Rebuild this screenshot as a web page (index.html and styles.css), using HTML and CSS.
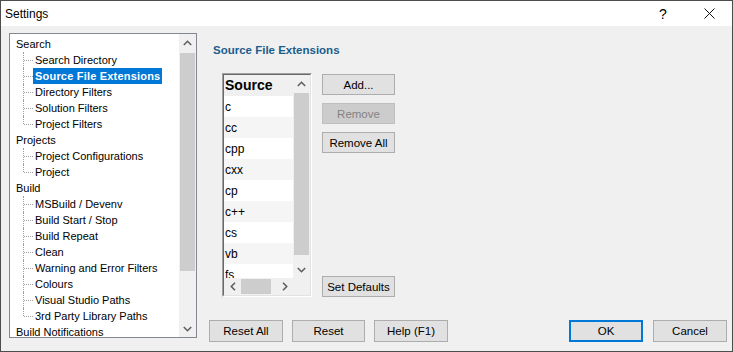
FILE: index.html
```html
<!DOCTYPE html>
<html>
<head>
<meta charset="utf-8">
<title>Settings</title>
<link rel="stylesheet" href="styles.css">
</head>
<body>
<div class="window">
  <div class="titlebar">
    <span class="title">Settings</span>
    <span class="tb-btn tb-help">?</span>
    <span class="tb-btn tb-close"><svg width="11" height="11" viewBox="0 0 11 11"><path d="M0.5 0.5 L10.5 10.5 M10.5 0.5 L0.5 10.5" stroke="#111" stroke-width="1" fill="none"/></svg></span>
  </div>
  <div class="body">
    <div class="tree">
      <div class="tree-items">
        <div class="node"><span class="label">Search</span></div>
        <div class="children">
          <div class="child"><span class="label">Search Directory</span></div>
          <div class="child"><span class="label selected">Source File Extensions</span></div>
          <div class="child"><span class="label">Directory Filters</span></div>
          <div class="child"><span class="label">Solution Filters</span></div>
          <div class="child"><span class="label">Project Filters</span></div>
        </div>
        <div class="node"><span class="label">Projects</span></div>
        <div class="children">
          <div class="child"><span class="label">Project Configurations</span></div>
          <div class="child"><span class="label">Project</span></div>
        </div>
        <div class="node"><span class="label">Build</span></div>
        <div class="children">
          <div class="child"><span class="label">MSBuild / Devenv</span></div>
          <div class="child"><span class="label">Build Start / Stop</span></div>
          <div class="child"><span class="label">Build Repeat</span></div>
          <div class="child"><span class="label">Clean</span></div>
          <div class="child"><span class="label">Warning and Error Filters</span></div>
          <div class="child"><span class="label">Colours</span></div>
          <div class="child"><span class="label">Visual Studio Paths</span></div>
          <div class="child"><span class="label">3rd Party Library Paths</span></div>
        </div>
        <div class="node"><span class="label">Build Notifications</span></div>
      </div>
      <div class="vscroll tree-scroll">
        <div class="arrow"><svg width="9" height="6" viewBox="0 0 9 6"><path d="M0.8 5 L4.5 1.3 L8.2 5" stroke="#606060" stroke-width="1.6" fill="none"/></svg></div>
        <div class="track"><div class="thumb tree-thumb"></div></div>
        <div class="arrow"><svg width="9" height="6" viewBox="0 0 9 6"><path d="M0.8 1 L4.5 4.7 L8.2 1" stroke="#606060" stroke-width="1.6" fill="none"/></svg></div>
      </div>
    </div>
    <div class="right">
      <div class="panel">
        <h2 class="panel-title">Source File Extensions</h2>
        <div class="editor">
          <div class="listbox">
            <div class="grid-area">
              <div class="grid">
                <div class="grid-head">Source</div>
                <div class="grid-row">c</div>
                <div class="grid-row alt">cc</div>
                <div class="grid-row">cpp</div>
                <div class="grid-row alt">cxx</div>
                <div class="grid-row">cp</div>
                <div class="grid-row alt">c++</div>
                <div class="grid-row">cs</div>
                <div class="grid-row alt">vb</div>
                <div class="grid-row">fs</div>
              </div>
              <div class="vscroll grid-vscroll">
                <div class="arrow"><svg width="9" height="6" viewBox="0 0 9 6"><path d="M0.8 5 L4.5 1.3 L8.2 5" stroke="#606060" stroke-width="1.6" fill="none"/></svg></div>
                <div class="track"><div class="thumb grid-thumb"></div></div>
                <div class="arrow"><svg width="9" height="6" viewBox="0 0 9 6"><path d="M0.8 1 L4.5 4.7 L8.2 1" stroke="#606060" stroke-width="1.6" fill="none"/></svg></div>
              </div>
            </div>
            <div class="hscroll-row">
              <div class="hscroll">
                <div class="harrow"><svg width="6" height="9" viewBox="0 0 6 9"><path d="M5 0.8 L1.3 4.5 L5 8.2" stroke="#606060" stroke-width="1.6" fill="none"/></svg></div>
                <div class="htrack"><div class="hthumb"></div></div>
                <div class="harrow"><svg width="6" height="9" viewBox="0 0 6 9"><path d="M1 0.8 L4.7 4.5 L1 8.2" stroke="#606060" stroke-width="1.6" fill="none"/></svg></div>
              </div>
              <div class="corner"></div>
            </div>
          </div>
          <div class="side-buttons">
            <button class="btn">Add...</button>
            <button class="btn" disabled>Remove</button>
            <button class="btn">Remove All</button>
            <button class="btn push-bottom">Set Defaults</button>
          </div>
        </div>
      </div>
      <div class="footer">
        <div class="footer-left">
          <button class="btn fbtn">Reset All</button>
          <button class="btn fbtn narrow">Reset</button>
          <button class="btn fbtn">Help (F1)</button>
        </div>
        <div class="footer-right">
          <button class="btn fbtn default">OK</button>
          <button class="btn fbtn">Cancel</button>
        </div>
      </div>
    </div>
  </div>
</div>
</body>
</html>
```
FILE: styles.css
```css
* { box-sizing: border-box; }
html, body { margin: 0; padding: 0; }
body {
  font-family: "Liberation Sans", Arial, sans-serif;
  font-size: 11px;
  color: #000;
  background: #f0f0f0;
}
.window {
  width: 733px;
  height: 352px;
  border: 1px solid #4d4d4d;
  background: #f0f0f0;
  display: flex;
  flex-direction: column;
}
.titlebar {
  height: 25px;
  background: #fff;
  display: flex;
  align-items: center;
  padding-left: 4px;
  font-size: 12px;
  flex: none;
}
.title { flex: 1; }
.tb-btn {
  width: 46px;
  height: 25px;
  display: flex;
  align-items: center;
  justify-content: center;
}
.tb-help { font-size: 14px; padding-top: 1px; }
.body {
  flex: 1;
  display: flex;
  padding: 7px 5px 9px 8px;
  min-height: 0;
}
/* tree */
.tree {
  width: 188px;
  height: 305px;
  border: 1px solid #828790;
  background: #fff;
  display: flex;
  flex: none;
}
.tree-items {
  flex: 1;
  overflow: hidden;
  padding-top: 2px;
}
.node, .child {
  height: 16px;
  line-height: 16px;
  white-space: nowrap;
}
.node { padding-left: 4px; }
.child { padding-left: 23px; position: relative; }
.child::before {
  content: "";
  position: absolute;
  left: 13px;
  top: 0;
  bottom: 0;
  border-left: 1px dotted #a0a0a0;
}
.child:last-child::before { bottom: 8px; }
.child::after {
  content: "";
  position: absolute;
  left: 14px;
  top: 8px;
  width: 9px;
  border-top: 1px dotted #a0a0a0;
}
.label {
  display: inline-block;
  padding: 0 2px;
  height: 16px;
}
.label.selected {
  background: #0078d7;
  color: #fff;
  font-weight: bold;
  letter-spacing: 0.2px;
}
.vscroll {
  width: 17px;
  background: #f0f0f0;
  display: flex;
  flex-direction: column;
  flex: none;
}
.arrow {
  height: 17px;
  display: flex;
  align-items: center;
  justify-content: center;
  flex: none;
}
.track { flex: 1; padding: 2px 1px 0 1px; }
.thumb { background: #cdcdcd; }
.tree-thumb { height: 218px; }
.grid-thumb { height: 162px; }
/* right */
.right {
  flex: 1;
  display: flex;
  flex-direction: column;
  margin-left: 12px;
}
.panel {
  flex: 1;
  padding-left: 4px;
}
.panel-title {
  margin: 10px 0 0 0;
  font-size: 11.5px;
  line-height: 14px;
  font-weight: bold;
  color: #1b5d8d;
}
.editor {
  display: flex;
  margin: 16px 0 0 9px;
  align-items: flex-start;
}
.listbox {
  width: 90px;
  height: 224px;
  border: 1px solid;
  border-color: #a0a0a0 #ffffff #ffffff #a0a0a0;
  background: #fff;
  display: flex;
  flex-direction: column;
  flex: none;
  position: relative;
}
.listbox::after {
  content: "";
  position: absolute;
  inset: 0;
  border: 1px solid;
  border-color: #696969 #e3e3e3 #e3e3e3 #696969;
  pointer-events: none;
}
.grid-area {
  height: 204px;
  display: flex;
  padding: 1px 1px 0 1px;
}
.grid {
  flex: 1;
  overflow: hidden;
  background: #fff;
}
.grid-head {
  height: 21px;
  line-height: 21px;
  padding-left: 1px;
  font-weight: bold;
  font-size: 14px;
  background: #f0f0f0;
}
.grid-row {
  height: 21px;
  line-height: 22px;
  padding-left: 1px;
  font-size: 12px;
  background: #fff;
}
.grid-row.alt { background: #f5f5f5; }
.grid-vscroll .track { padding-top: 1px; }
.hscroll-row {
  height: 18px;
  display: flex;
  padding: 0 1px 1px 1px;
}
.hscroll {
  flex: 1;
  display: flex;
  background: #f0f0f0;
}
.harrow {
  width: 17px;
  display: flex;
  align-items: center;
  justify-content: center;
  flex: none;
}
.htrack { flex: 1; padding: 1px 0 1px 0; }
.hthumb { width: 30px; height: 100%; background: #cdcdcd; }
.corner { width: 17px; background: #f0f0f0; }
.side-buttons {
  display: flex;
  flex-direction: column;
  gap: 8px;
  margin-left: 10px;
  height: 224px;
  padding-top: 1px;
}
.btn {
  width: 73px;
  height: 21px;
  background: #e1e1e1;
  border: 1px solid #adadad;
  font-family: "Liberation Sans", Arial, sans-serif;
  font-size: 11.5px;
  color: #000;
  padding: 0;
  margin: 0;
  border-radius: 0;
}
.btn:disabled {
  background: #cccccc;
  border-color: #bfbfbf;
  color: #838383;
}
.push-bottom { margin-top: auto; }
.footer {
  height: 22px;
  display: flex;
  justify-content: space-between;
  flex: none;
}
.footer-left, .footer-right {
  display: flex;
  gap: 9px;
}
.footer-right { gap: 10px; }
.fbtn { width: 74px; height: 22px; }
.fbtn.narrow { width: 73px; }
.fbtn.default { border: 2px solid #0078d7; }
```
